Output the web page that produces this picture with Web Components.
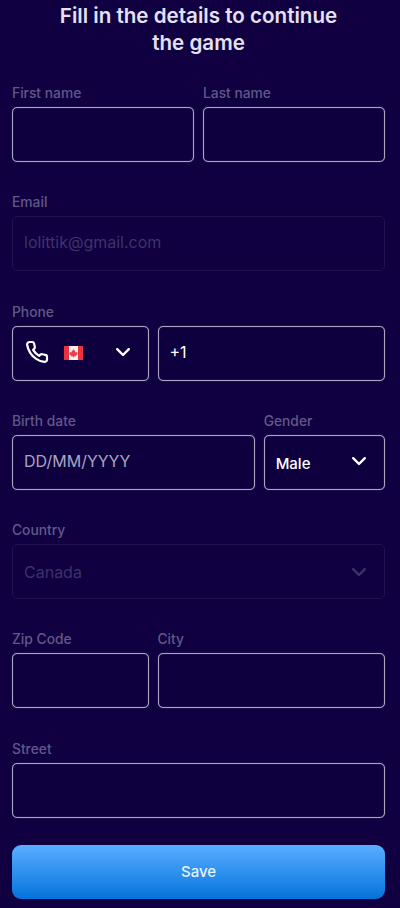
<!DOCTYPE html>
<html>
<head>
<meta charset="utf-8">
<title>Details</title>
<style>
  html, body { margin: 0; background: #100041; }
  body { font-family: Inter, "Noto Sans", sans-serif; }
  .lead { display: flex; align-items: center; flex: 1; }
</style>
</head>
<body>
<details-form>
  <form-title>Fill in the details to continue<br>the game</form-title>

  <form-row cols="1fr 1fr">
    <form-field label="First name"></form-field>
    <form-field label="Last name"></form-field>
  </form-row>

  <form-row>
    <form-field label="Email" disabled>lolittik@gmail.com</form-field>
  </form-row>

  <form-row cols="3fr 5fr">
    <form-field label="Phone" select>
      <span slot="lead" class="lead"><phone-icon></phone-icon><canada-flag></canada-flag></span>
    </form-field>
    <form-field label="&nbsp;">+1</form-field>
  </form-row>

  <form-row cols="2fr 1fr">
    <form-field label="Birth date" hint>DD/MM/YYYY</form-field>
    <form-field label="Gender" select small>Male</form-field>
  </form-row>

  <form-row>
    <form-field label="Country" select disabled low>Canada</form-field>
  </form-row>

  <form-row cols="3fr 5fr">
    <form-field label="Zip Code"></form-field>
    <form-field label="City"></form-field>
  </form-row>

  <form-row>
    <form-field label="Street"></form-field>
  </form-row>

  <save-button>Save</save-button>
</details-form>

<script>
// page wrapper
class DetailsForm extends HTMLElement {
  constructor() {
    super();
    const shadow = this.attachShadow({ mode: 'open' });
    shadow.innerHTML = `
      <style>
        :host {
          display: block;
          box-sizing: border-box;
          width: 100%;
          height: 908px;
          padding: 2px 15px 0 12px;
          overflow: hidden;
          background-color: #100041;
        }
      </style>
      <slot></slot>
    `;
  }
}
customElements.define('details-form', DetailsForm);

class FormTitle extends HTMLElement {
  constructor() {
    super();
    const shadow = this.attachShadow({ mode: 'open' });
    shadow.innerHTML = `
      <style>
        :host {
          display: block;
          height: 80px;
          box-sizing: border-box;
          text-align: center;
          font-size: 20.6px;
          font-weight: 600;
          line-height: 27px;
          color: #e4e1f2;
        }
      </style>
      <slot></slot>
    `;
  }
}
customElements.define('form-title', FormTitle);

class FormRow extends HTMLElement {
  constructor() {
    super();
    const shadow = this.attachShadow({ mode: 'open' });
    const cols = this.getAttribute('cols') || '1fr';
    shadow.innerHTML = `
      <style>
        :host {
          display: grid;
          grid-template-columns: ${cols};
          column-gap: 9px;
          margin-bottom: 29.3px;
        }
      </style>
      <slot></slot>
    `;
  }
}
customElements.define('form-row', FormRow);

const CHEVRON = `<svg class="chev" width="16" height="16" viewBox="0 0 16 16" fill="none">
  <path d="M2.2 5.2L8 11l5.8-5.8" stroke="currentColor" stroke-width="2.4" stroke-linecap="round" stroke-linejoin="round"/>
</svg>`;

class FormField extends HTMLElement {
  constructor() {
    super();
    const shadow = this.attachShadow({ mode: 'open' });
    const label = this.getAttribute('label') || '';
    const select = this.hasAttribute('select');
    shadow.innerHTML = `
      <style>
        :host {
          display: block;
          min-width: 0;
          --line: #aaa6c2;
          --text: #ffffff;
        }
        :host([hint]) { --text: #a9a5bf; }
        :host([disabled]) { --line: #211350; --text: #3f3269; }
        label {
          display: block;
          height: 25px;
          padding-top: 3px;
          font-size: 13.8px;
          font-weight: 500;
          line-height: 16px;
          box-sizing: border-box;
          color: #625888;
          white-space: nowrap;
        }
        .box {
          display: flex;
          align-items: center;
          box-sizing: border-box;
          height: 55px;
          padding: 0 12px 2px 11px;
          border: 1px solid var(--line);
          border-radius: 5px;
          box-shadow: 0 0 1px rgba(170, 166, 194, .7), inset 0 0 1px rgba(170, 166, 194, .7);
          background: #0e003f;
          font-size: 16px;
          color: var(--text);
        }
        :host([small]) .box { font-size: 15px; font-weight: 500; padding-top: 2px; padding-bottom: 0; }
        :host([disabled]) .box { background: transparent; box-shadow: none; padding-bottom: 3px; }
        :host([low]) .box { padding-top: 1px; padding-bottom: 0; }
        .value { flex: 1; white-space: nowrap; }
        .chev { flex: none; margin-right: 5px; }
        :host([small]) .chev { margin-top: -4px; }
        :host([disabled]) .chev { color: #3f3269; }
      </style>
      <label>${label}</label>
      <div class="box">
        <slot name="lead"></slot>
        <span class="value"><slot></slot></span>
        ${select ? CHEVRON : ''}
      </div>
    `;
  }
}
customElements.define('form-field', FormField);

class PhoneIcon extends HTMLElement {
  constructor() {
    super();
    const shadow = this.attachShadow({ mode: 'open' });
    shadow.innerHTML = `
      <style>
        :host { display: inline-flex; margin-right: 15px; margin-left: 1px; margin-top: -1px; }
      </style>
      <svg width="24" height="24" viewBox="0 0 24 24" fill="none" stroke="#fff" stroke-width="2.2" stroke-linecap="round" stroke-linejoin="round">
        <path d="M22 16.9v2.6a2.4 2.4 0 0 1-2.6 2.4 19.8 19.8 0 0 1-8.2-3.1 19.5 19.5 0 0 1-6-6 19.8 19.8 0 0 1-3.1-8.3A2.4 2.4 0 0 1 4.5 2h2.6a2 2 0 0 1 2 1.7c.1 1 .4 1.9.7 2.8a2 2 0 0 1-.5 2.1L8.1 9.9a16 16 0 0 0 6 6l1.3-1.3a2 2 0 0 1 2.1-.4c.9.3 1.8.5 2.8.7a2 2 0 0 1 1.7 2z"/>
      </svg>
    `;
  }
}
customElements.define('phone-icon', PhoneIcon);

class CanadaFlag extends HTMLElement {
  constructor() {
    super();
    const shadow = this.attachShadow({ mode: 'open' });
    shadow.innerHTML = `
      <style>
        :host { display: inline-flex; margin-top: 2px; }
      </style>
      <svg width="19" height="14" viewBox="0 0 19 14">
        <rect width="19" height="14" fill="#fbeeee"/>
        <rect width="5" height="14" fill="#ea3340"/>
        <rect x="14" width="5" height="14" fill="#ea3340"/>
        <path d="M9.5 3l1 1.8.9-.4-.3 2.2 1.3-.8.3.8 1.1-.2-.4 1.4.5.3-2.2 1.6.2.8-2-.3v1.3h-.8v-1.3l-2 .3.2-.8-2.2-1.6.5-.3-.4-1.4 1.1.2.3-.8 1.3.8-.3-2.2.9.4z" fill="#e8404c"/>
      </svg>
    `;
  }
}
customElements.define('canada-flag', CanadaFlag);

class SaveButton extends HTMLElement {
  constructor() {
    super();
    const shadow = this.attachShadow({ mode: 'open' });
    shadow.innerHTML = `
      <style>
        :host {
          display: block;
          margin-top: -2.1px;
        }
        button {
          display: block;
          width: 100%;
          height: 54px;
          border: none;
          border-radius: 9px;
          background: linear-gradient(180deg, #5aaeff 0%, #0473dd 100%);
          color: #e6f3ff;
          font: 500 15px Inter, "Noto Sans", sans-serif;
          cursor: pointer;
        }
      </style>
      <button><slot></slot></button>
    `;
  }
}
customElements.define('save-button', SaveButton);
</script>
</body>
</html>
